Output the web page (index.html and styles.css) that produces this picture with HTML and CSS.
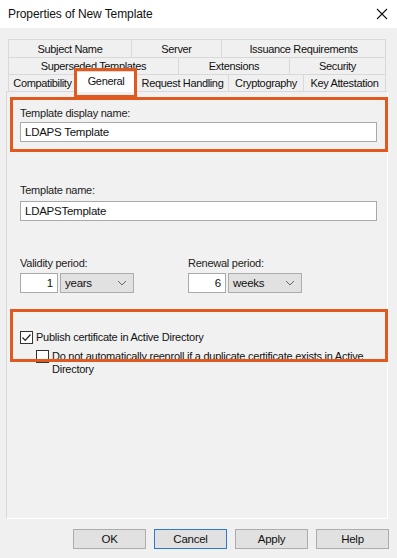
FILE: index.html
```html
<!DOCTYPE html>
<html>
<head>
<meta charset="utf-8">
<link rel="stylesheet" href="styles.css">
</head>
<body>
<div class="window">
  <div class="titlebar">
    <span class="title">Properties of New Template</span>
    <svg class="close" width="12" height="12" viewBox="0 0 12 12"><path d="M1 1L11 11M11 1L1 11" stroke="#111" stroke-width="1.1" fill="none"/></svg>
  </div>
  <div class="tabs">
    <div class="row r1">
      <div class="tab w123">Subject Name</div>
      <div class="tab w90">Server</div>
      <div class="tab w165 last">Issuance Requirements</div>
    </div>
    <div class="row">
      <div class="tab w170">Superseded Templates</div>
      <div class="tab w111">Extensions</div>
      <div class="tab w97 last">Security</div>
    </div>
    <div class="row">
      <div class="tab w68">Compatibility</div>
      <div class="tab w60 sel">General</div>
      <div class="tab w92">Request Handling</div>
      <div class="tab w75">Cryptography</div>
      <div class="tab w83 last">Key Attestation</div>
    </div>
  </div>
  <div class="panel">
    <div class="field f1">
      <div class="label">Template display name:</div>
      <div class="input">LDAPS Template</div>
    </div>
    <div class="field f2">
      <div class="label">Template name:</div>
      <div class="input">LDAPSTemplate</div>
    </div>
    <div class="periods">
      <div class="period">
        <div class="label">Validity period:</div>
        <div class="pctl">
          <div class="num">1</div>
          <div class="select"><span>years</span><svg width="10" height="6" viewBox="0 0 10 6"><path d="M1 1L5 5L9 1" stroke="#666" stroke-width="1" fill="none"/></svg></div>
        </div>
      </div>
      <div class="period">
        <div class="label">Renewal period:</div>
        <div class="pctl">
          <div class="num">6</div>
          <div class="select"><span>weeks</span><svg width="10" height="6" viewBox="0 0 10 6"><path d="M1 1L5 5L9 1" stroke="#666" stroke-width="1" fill="none"/></svg></div>
        </div>
      </div>
    </div>
    <div class="check c1">
      <span class="box"><svg width="11" height="11" viewBox="0 0 11 11"><path d="M1.5 5.5L4.2 8.3L9.5 2.5" stroke="#222" stroke-width="1.2" fill="none"/></svg></span>
      <span class="ctext">Publish certificate in Active Directory</span>
    </div>
    <div class="check c2">
      <span class="box"></span>
      <span class="ctext wrap">Do not automatically reenroll if a duplicate certificate exists in Active Directory</span>
    </div>
  </div>
  <div class="buttons">
    <div class="btn">OK</div>
    <div class="btn focus">Cancel</div>
    <div class="btn">Apply</div>
    <div class="btn">Help</div>
  </div>
  <div class="mark m-tab"></div>
  <div class="mark m-name"></div>
  <div class="mark m-pub"></div>
</div>
</body>
</html>
```
FILE: styles.css
```css
* { box-sizing: border-box; }
html, body { margin: 0; padding: 0; }
body {
  background: #f0f0f0;
  font-family: "Liberation Sans", Arial, sans-serif;
  font-size: 11px;
  letter-spacing: -0.25px;
  color: #111;
}
.window {
  position: relative;
  width: 397px;
  height: 558px;
  display: flex;
  flex-direction: column;
  overflow: hidden;
}
.titlebar {
  height: 28px;
  background: #fff;
  display: flex;
  align-items: center;
  justify-content: space-between;
  padding: 0 8px 0 8px;
}
.title { font-size: 12px; color: #111; letter-spacing: -0.1px; }
.close { margin-right: 1px; }
.tabs {
  margin: 11px 0 0 8px;
  width: 378px;
}
.row {
  display: flex;
  align-items: flex-start;
  height: 17px;
}
.row.r1 { height: 18px; }
.tab {
  height: 100%;
  border-top: 1px solid #d9d9d9;
  border-left: 1px solid #d9d9d9;
  display: flex;
  align-items: center;
  justify-content: center;
  white-space: nowrap;
  font-size: 11px;
  letter-spacing: -0.35px;
  color: #111;
}
.tab.last { border-right: 1px solid #d9d9d9; }
.tab.sel {
  position: relative;
  z-index: 2;
  height: 21px;
  margin-top: -3px;
  background: #fff;
  border-right: 1px solid #d9d9d9;
  padding-bottom: 2px;
}
.w123 { width: 123px; } .w90 { width: 90px; } .w165 { width: 165px; }
.w170 { width: 170px; } .w111 { width: 111px; } .w97 { width: 97px; }
.w68 { width: 68px; } .w60 { width: 60px; } .w92 { width: 92px; }
.w75 { width: 75px; } .w83 { width: 83px; }
.panel {
  margin: 0 9px 0 6px;
  height: 428px;
  border: 1px solid #d9d9d9;
  border-right-color: #fff;
  border-bottom-color: #fff;
  background: #f1f1f1;
  padding: 15px 10px 0 13px;
  display: flex;
  flex-direction: column;
}
.label { line-height: 13px; height: 13px; color: #222; }
.input {
  margin-top: 2px;
  height: 20px;
  width: 357px;
  background: #fff;
  border: 1px solid #a9a9a9;
  padding: 0 4px;
  line-height: 18px;
  font-size: 11.5px;
  color: #111;
}
.f2 { margin-top: 42px; }
.f2 .input { margin-top: 4px; }
.periods {
  margin-top: 36px;
  display: flex;
}
.period { width: 168px; }
.pctl {
  margin-top: 3px;
  display: flex;
  gap: 2px;
}
.num {
  width: 38px;
  height: 20px;
  background: #fff;
  border: 1px solid #a9a9a9;
  text-align: right;
  padding-right: 4px;
  line-height: 18px;
  font-size: 11.5px;
}
.select {
  width: 74px;
  height: 20px;
  background: #e1e1e1;
  border: 1px solid #adadad;
  display: flex;
  align-items: center;
  justify-content: space-between;
  padding: 0 6px 0 4px;
  font-size: 11.5px;
}
.check {
  display: flex;
  align-items: flex-start;
}
.c1 { margin-top: 38px; }
.c2 { margin-top: 6px; margin-left: 16px; }
.box {
  width: 13px;
  height: 13px;
  flex: none;
  background: #fff;
  border: 1px solid #333;
  display: flex;
  align-items: center;
  justify-content: center;
}
.ctext {
  margin-left: 3px;
  line-height: 13px;
  color: #111;
}
.ctext.wrap { width: 330px; }
.buttons {
  margin-top: 10px;
  display: flex;
  justify-content: flex-end;
  gap: 8px;
  padding-right: 8px;
}
.btn {
  width: 73px;
  height: 20px;
  background: #e1e1e1;
  border: 1px solid #adadad;
  display: flex;
  align-items: center;
  justify-content: center;
  font-size: 11.5px;
  color: #111;
}
.btn.focus { border-color: #2a7ad6; }
.mark {
  position: absolute;
  border: 3px solid #e05a1f;
  z-index: 5;
}
.m-tab { left: 74px; top: 68px; width: 63px; height: 30px; }
.m-name { left: 10px; top: 97px; width: 378px; height: 55px; }
.m-pub { left: 10px; top: 309px; width: 378px; height: 53px; }
```
